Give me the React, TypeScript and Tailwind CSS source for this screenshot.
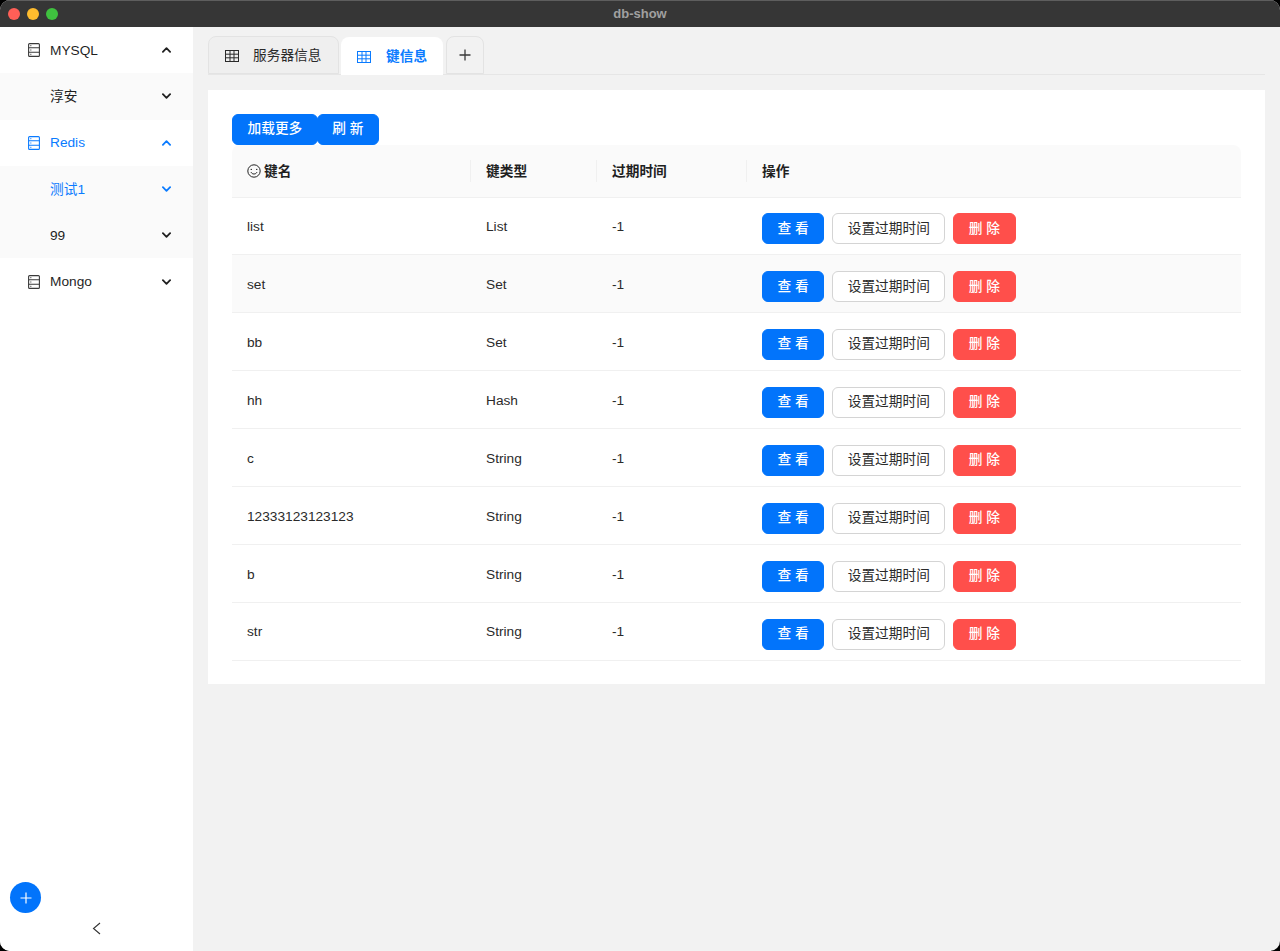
function ServerIcon({ className }: { className?: string }) {
  return (
    <svg viewBox="0 0 12 14" className={className} fill="none" stroke="currentColor" strokeWidth="1.1">
      <rect x="0.6" y="0.6" width="10.8" height="12.8" rx="1" />
      <path d="M0.6 4.8h10.8M0.6 9.200h10.800" />
      <path d="M2.200 2.700h1.200M2.200 7h1.200M2.200 11.300h1.200" strokeWidth="0.9" />
    </svg>
  );
}

function TableIcon({ className }: { className?: string }) {
  return (
    <svg viewBox="0 0 14 12" className={className} fill="none" stroke="currentColor" strokeWidth="1">
      <rect x="0.5" y="0.5" width="13" height="11" />
      <path d="M0.5 4.2h13M0.5 7.8h13M5 0.5v11M9 0.5v11" />
    </svg>
  );
}

function Chevron({ up, className }: { up?: boolean; className?: string }) {
  return (
    <svg viewBox="0 0 10 6" className={`w-[9px] h-[6px] ${className ?? ""}`} fill="none" stroke="currentColor" strokeWidth="2" strokeLinecap="round" strokeLinejoin="round">
      <path d={up ? "M1 5l4-4 4 4" : "M1 1l4 4 4-4"} />
    </svg>
  );
}

function MenuItem({ label, icon, up, active, sub }: { label: string; icon?: boolean; up?: boolean; active?: boolean; sub?: boolean }) {
  return (
    <div className={`h-[46.3px] flex items-center pl-[28px] pr-[22px] ${sub ? "bg-[#fafafa]" : "bg-white"} ${active ? "text-[#0a7bff]" : "text-[#1f1f1f]"}`}>
      <div className="w-[22px] shrink-0">
        {icon && <ServerIcon className={`w-3 h-[14px] ${active ? "" : "text-[#3a3a3a]"}`} />}
      </div>
      <span className="flex-1 pt-[2px] text-[13.7px]">{label}</span>
      <Chevron up={up} />
    </div>
  );
}

function Btn({ children, kind }: { children: React.ReactNode; kind: "primary" | "default" | "danger" }) {
  const styles = {
    primary: "bg-[#0274fb] text-white border-[#0274fb] font-medium",
    default: "bg-white text-[#2a2a2a] border-[#d4d4d4]",
    danger: "bg-[#ff4f4b] text-white border-[#ff4f4b] font-medium",
  };
  return (
    <button className={`h-[31px] px-[14.5px] text-[13.7px] rounded-md border whitespace-nowrap ${styles[kind]}`}>{children}</button>
  );
}

const rows = [
  ["list", "List"],
  ["set", "Set"],
  ["bb", "Set"],
  ["hh", "Hash"],
  ["c", "String"],
  ["12333123123123", "String"],
  ["b", "String"],
  ["str", "String"],
];

function HeaderCell({ children, className }: { children: React.ReactNode; className?: string }) {
  return (
    <th className={`relative p-0 pl-[15px] pt-[3px] text-left text-[13.7px] font-semibold text-[#1f1f1f] ${className ?? ""}`}>
      {children}
    </th>
  );
}

function Sep() {
  return <span className="absolute -left-px top-1/2 -translate-y-1/2 w-px h-[22px] bg-[#f0f0f0]" />;
}

export default function App() {
  return (
    <div className="w-[1280px] h-[951px] bg-black font-['Liberation_Sans','Noto_Sans_CJK_SC',sans-serif]">
      <div className="w-full h-full rounded-[10px] overflow-hidden flex flex-col bg-[#f2f2f2]">
        <div className="relative h-[27px] shrink-0 bg-[#363636] border-t border-[#5e5e5e] flex items-center justify-center">
          <div className="absolute left-[8px] top-[7px] flex gap-[7.500px]">
            <span className="w-[11.500px] h-[11.500px] rounded-full bg-[#ff5f57]" />
            <span className="w-[11.500px] h-[11.500px] rounded-full bg-[#febc2e]" />
            <span className="w-[11.500px] h-[11.500px] rounded-full bg-[#3fc13f]" />
          </div>
          <span className="text-[13px] font-bold text-[#a0a0a0]">db-show</span>
        </div>
        <div className="flex-1 flex min-h-0">
          <aside className="w-[193px] shrink-0 bg-white flex flex-col">
            <MenuItem label="MYSQL" icon up />
            <MenuItem label="淳安" sub />
            <MenuItem label="Redis" icon up active />
            <MenuItem label="测试1" sub active />
            <MenuItem label="99" sub />
            <MenuItem label="Mongo" icon />
            <div className="flex-1" />
            <button className="ml-[10px] w-[31px] h-[31px] rounded-full bg-[#0274fb] flex items-center justify-center">
              <svg viewBox="0 0 12 12" className="w-3 h-3" stroke="white" strokeWidth="1.2"><path d="M6 0.5v11M0.5 6h11" /></svg>
            </button>
            <div className="h-[38px] pb-2 flex items-center justify-center">
              <svg viewBox="0 0 9 13" className="w-[9px] h-[13px]" fill="none" stroke="#333" strokeWidth="1.1"><path d="M8 1L1.5 6.5 8 12" /></svg>
            </div>
          </aside>
          <main className="flex-1 pl-[15px] pr-[15px] pt-[10px]">
            <div className="flex items-end h-[38px] border-b border-[#e6e6e6]">
              <div className="h-[38px] w-[131px] flex items-center pl-[16px] gap-[14px] pt-px bg-[#efefef] border border-[#e3e3e3] rounded-t-lg text-[13.7px] text-[#2a2a2a]">
                <TableIcon className="w-[14px] h-3" />
                <span className="pt-px">服务器信息</span>
              </div>
              <div className="ml-[2px] h-[38px] w-[102px] flex items-center pl-[16px] gap-[15px] pt-px bg-white rounded-t-lg text-[13.7px] font-semibold text-[#0a7bff] -mb-px">
                <TableIcon className="w-[14px] h-3" />
                <span className="pt-px">键信息</span>
              </div>
              <div className="ml-[3px] h-[38px] w-[38px] flex items-center justify-center bg-[#f2f2f2] border border-[#e3e3e3] rounded-t-lg">
                <svg viewBox="0 0 12 12" className="w-3 h-3" stroke="#3a3a3a" strokeWidth="1.3"><path d="M6 0.5v11M0.5 6h11" /></svg>
              </div>
            </div>
            <section className="mt-[15px] bg-white p-6 pb-[23px]">
              <div className="flex -space-x-px">
                <Btn kind="primary">加载更多</Btn>
                <Btn kind="primary">刷 新</Btn>
              </div>
              <table className="w-full border-collapse table-fixed">
                <colgroup>
                  <col className="w-[239px]" />
                  <col className="w-[126px]" />
                  <col className="w-[150px]" />
                  <col />
                </colgroup>
                <thead>
                  <tr className="h-[52px] bg-[#fafafa] border-b border-[#f0f0f0]">
                    <HeaderCell className="rounded-tl-lg">
                      <span className="flex items-center gap-[3px]">
                        <svg viewBox="0 0 14 14" className="w-[14px] h-[14px] -mt-[3px]" fill="none" stroke="#222" strokeWidth="1">
                          <circle cx="7" cy="7" r="6.2" />
                          <path d="M4 8.2c.7 1.2 1.7 1.8 3 1.8s2.300-.6 3-1.800" />
                          <path d="M3.600 5.400h1.400M9 5.400h1.400" />
                        </svg>
                        键名
                      </span>
                    </HeaderCell>
                    <HeaderCell><Sep />键类型</HeaderCell>
                    <HeaderCell><Sep />过期时间</HeaderCell>
                    <HeaderCell className="rounded-tr-lg"><Sep />操作</HeaderCell>
                  </tr>
                </thead>
                <tbody>
                  {rows.map(([name, type], i) => (
                    <tr key={name} className={`h-[57.900px] border-b border-[#f0f0f0] text-[13.7px] text-[#2a2a2a] ${i === 1 ? "bg-[#fafafa]" : ""}`}>
                      <td className="p-0 pl-[15px] pt-[3px]">{name}</td>
                      <td className="p-0 pl-[15px] pt-[3px]">{type}</td>
                      <td className="p-0 pl-[15px] pt-[3px]">-1</td>
                      <td className="p-0 pl-[15px] pt-[6px]">
                        <div className="flex gap-2">
                          <Btn kind="primary">查 看</Btn>
                          <Btn kind="default">设置过期时间</Btn>
                          <Btn kind="danger">删 除</Btn>
                        </div>
                      </td>
                    </tr>
                  ))}
                </tbody>
              </table>
            </section>
          </main>
        </div>
      </div>
    </div>
  );
}
